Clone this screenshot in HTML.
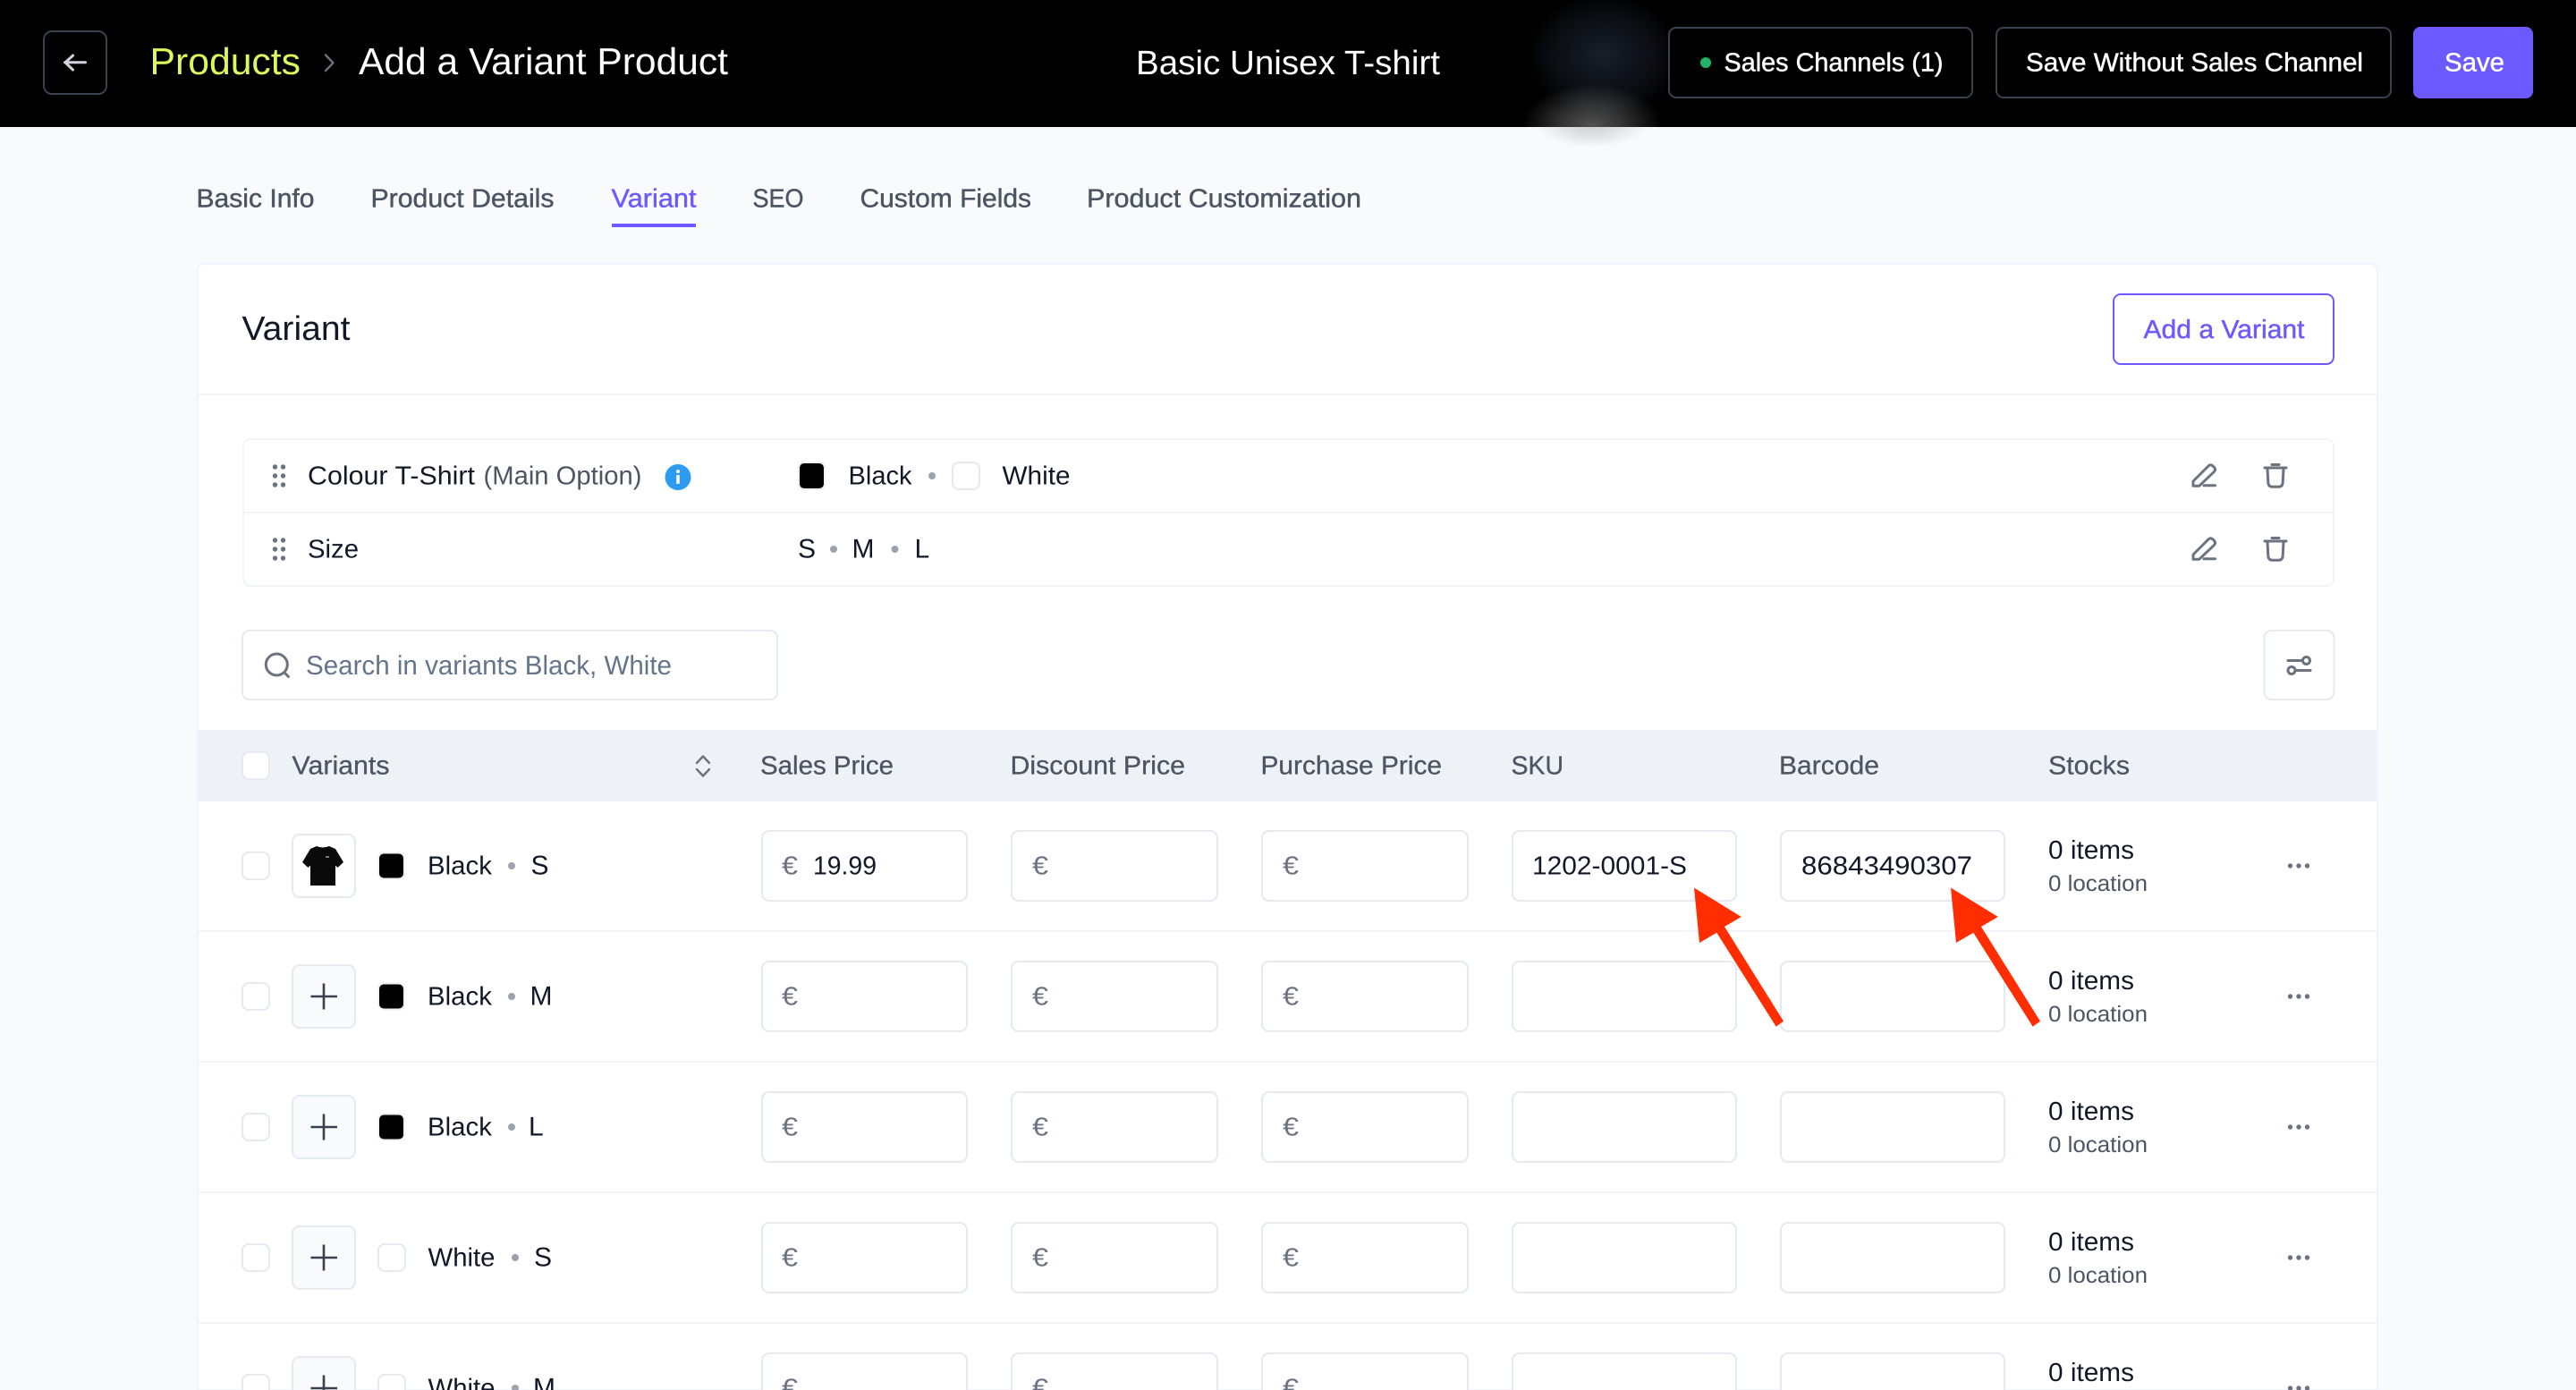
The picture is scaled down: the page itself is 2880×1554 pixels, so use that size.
<!DOCTYPE html>
<html lang="en"><head><meta charset="utf-8"><title>Add a Variant Product</title>
<style>
html,body{margin:0;padding:0;width:2880px;height:1554px;overflow:hidden;background:#f9fafc}
svg{display:block;font-family:"Liberation Sans",sans-serif;font-size:29px;text-rendering:geometricPrecision}
.d{fill:#111827}.g{fill:#4b5563}.e{fill:#6b7280}.w{fill:#fff}.m{stroke-width:.45px}
.box{fill:#fff;stroke:#e5e9f0;stroke-width:2}
.ic{fill:none;stroke:#6b7280;stroke-width:3;stroke-linecap:round;stroke-linejoin:round}
.sep{fill:#9ca3af}
</style></head><body>
<svg width="2880" height="1554" viewBox="0 0 2880 1554" xmlns="http://www.w3.org/2000/svg">
<defs>
<radialGradient id="navyA"><stop offset="0" stop-color="#1a202c" stop-opacity=".95"/><stop offset=".5" stop-color="#141922" stop-opacity=".7"/><stop offset="1" stop-color="#1a202c" stop-opacity="0"/></radialGradient>
<radialGradient id="gray"><stop offset="0" stop-color="#a3a3a3" stop-opacity=".5"/><stop offset=".45" stop-color="#a3a3a3" stop-opacity=".3"/><stop offset="1" stop-color="#a3a3a3" stop-opacity="0"/></radialGradient>
<clipPath id="top"><rect x="0" y="0" width="2880" height="142"/></clipPath>
<clipPath id="bot"><rect x="0" y="142" width="2880" height="100"/></clipPath>
<clipPath id="r5"><rect x="0" y="900" width="2880" height="70"/></clipPath>
<g id="inputs">
<rect class="box" x="852" y="929" width="229" height="78" rx="8"/>
<rect class="box" x="1131" y="929" width="230" height="78" rx="8"/>
<rect class="box" x="1411" y="929" width="230" height="78" rx="8"/>
<rect class="box" x="1691" y="929" width="250" height="78" rx="8"/>
<rect class="box" x="1991" y="929" width="250" height="78" rx="8"/>
<rect class="box" x="271" y="953" width="30" height="30" rx="7"/>
<circle cx="2560.5" cy="968" r="2.7" fill="#6b7280"/><circle cx="2570" cy="968" r="2.7" fill="#6b7280"/><circle cx="2579.5" cy="968" r="2.7" fill="#6b7280"/>
<rect x="222" y="1040" width="2436" height="2" fill="#f1f4f8"/>
</g>
<g id="plus">
<rect x="327" y="933" width="70" height="70" rx="8" fill="#f8fafc" stroke="#e5e9f0" stroke-width="2"/>
<path d="M347.5 968H377M362 953.5V982.5" fill="none" stroke="#374151" stroke-width="2.6"/>
</g>
<g id="blk"><rect x="423" y="953.500" width="29" height="29" rx="6" fill="#000" stroke="#eef1f5" stroke-width="2"/></g>
<g id="wht"><rect x="423" y="953" width="30" height="30" rx="7" class="box"/></g>
<g id="pen"><path class="ic" d="M2452 543.200v-5.200l17-17q2.400-2.200 4.800-.2l1.800 1.800q2 2.400-.2 4.800l-16.600 15.800zM2464 542.800h12.500"/></g>
<g id="trash"><path class="ic" d="M2532 523h24M2540 519.500h8M2535 523.500l.8 16q.4 4.700 4.700 4.700h7q4.300 0 4.700-4.700l.8-16"/></g>
<g id="drag"><g fill="#6b7280"><circle cx="307.500" cy="522" r="2.700"/><circle cx="316.500" cy="522" r="2.700"/><circle cx="307.500" cy="532" r="2.700"/><circle cx="316.500" cy="532" r="2.700"/><circle cx="307.500" cy="542" r="2.700"/><circle cx="316.500" cy="542" r="2.700"/></g></g>
</defs>

<rect width="2880" height="1554" fill="#f9fafc"/>
<!-- Header -->
<rect width="2880" height="142" fill="#000"/>
<ellipse cx="1793" cy="62" rx="85" ry="68" fill="url(#navyA)" clip-path="url(#top)"/>
<ellipse cx="1780" cy="140" rx="78" ry="46" fill="url(#gray)" clip-path="url(#top)"/>
<ellipse cx="1780" cy="140" rx="62" ry="25" fill="url(#gray)" clip-path="url(#bot)"/>

<rect x="49" y="35" width="70" height="70" rx="9" fill="none" stroke="#39414f" stroke-width="2"/>
<path d="M72.500 69.800H95.500M81.500 62l-8.500 7.800 8.500 8.300" fill="none" stroke="#d1d5db" stroke-width="3" stroke-linecap="round" stroke-linejoin="round"/>
<text x="167.500" y="83" font-size="42" fill="#dcf85e" textLength="168.500" lengthAdjust="spacingAndGlyphs">Products</text>
<path d="M364 61.500l8.500 8.800-8.500 8.800" fill="none" stroke="#6b7280" stroke-width="2.400" stroke-linecap="round" stroke-linejoin="round"/>
<text x="401" y="83" font-size="42" class="w" textLength="413" lengthAdjust="spacingAndGlyphs">Add a Variant Product</text>
<text x="1270" y="83" font-size="38" class="w" textLength="340" lengthAdjust="spacingAndGlyphs">Basic Unisex T-shirt</text>

<rect x="1866" y="31" width="339" height="78" rx="8" fill="#000" stroke="#39414f" stroke-width="2"/>
<circle cx="1907" cy="70" r="6" fill="#1eb566"/>
<text x="1927.500" y="79.500" class="w m" stroke="#fff" textLength="245" lengthAdjust="spacingAndGlyphs">Sales Channels (1)</text>
<rect x="2232" y="31" width="441" height="78" rx="8" fill="#000" stroke="#39414f" stroke-width="2"/>
<text x="2265" y="79.500" class="w m" stroke="#fff" textLength="377" lengthAdjust="spacingAndGlyphs">Save Without Sales Channel</text>
<rect x="2698" y="30" width="134" height="80" rx="8" fill="#6d5aff"/>
<text x="2733" y="79.500" class="w m" stroke="#fff" textLength="67" lengthAdjust="spacingAndGlyphs">Save</text>

<!-- Tabs -->
<text x="219.500" y="231.500" class="g m" stroke="#4b5563" textLength="132" lengthAdjust="spacingAndGlyphs">Basic Info</text>
<text x="414.500" y="231.500" class="g m" stroke="#4b5563" textLength="205" lengthAdjust="spacingAndGlyphs">Product Details</text>
<text x="683.500" y="231.500" fill="#6d5aff" stroke="#6d5aff" class="m" textLength="95" lengthAdjust="spacingAndGlyphs">Variant</text>
<rect x="684" y="250" width="94" height="4" fill="#6d5aff"/>
<text x="841.500" y="231.500" class="g m" stroke="#4b5563" textLength="57" lengthAdjust="spacingAndGlyphs">SEO</text>
<text x="961.500" y="231.500" class="g m" stroke="#4b5563" textLength="191.500" lengthAdjust="spacingAndGlyphs">Custom Fields</text>
<text x="1215" y="231.500" class="g m" stroke="#4b5563" textLength="307" lengthAdjust="spacingAndGlyphs">Product Customization</text>

<!-- Card -->
<path d="M221 1554V303q0-8 8-8H2650q8 0 8 8V1554z" fill="#fff" stroke="#f1f4f8" stroke-width="2"/>
<text x="270.500" y="380" font-size="38" class="d" textLength="121" lengthAdjust="spacingAndGlyphs">Variant</text>
<rect x="2363" y="329" width="246" height="78" rx="8" fill="#fff" stroke="#6d5aff" stroke-width="2"/>
<text x="2396.500" y="378" fill="#6d5aff" stroke="#6d5aff" class="m" textLength="180" lengthAdjust="spacingAndGlyphs">Add a Variant</text>
<rect x="222" y="440" width="2436" height="2" fill="#f1f4f8"/>

<!-- Options -->
<rect x="272" y="491" width="2337" height="164" rx="8" fill="#fff" stroke="#f1f4f8" stroke-width="2"/>
<rect x="272" y="572" width="2337" height="2" fill="#f1f4f8"/>
<use href="#drag"/><use href="#drag" y="82"/>
<text x="344" y="541.500" class="d" textLength="187" lengthAdjust="spacingAndGlyphs">Colour T-Shirt</text>
<text x="540.500" y="541.500" class="g" textLength="177" lengthAdjust="spacingAndGlyphs">(Main Option)</text>
<circle cx="758" cy="533.500" r="14.500" fill="#2e9bf0"/>
<circle cx="758" cy="527" r="2" fill="#fff"/><rect x="756.200" y="531" width="3.600" height="10" rx="1" fill="#fff"/>
<rect x="893" y="517" width="29" height="30" rx="6" fill="#000" stroke="#eef1f5" stroke-width="2"/>
<text x="948.500" y="541.500" class="d" textLength="71" lengthAdjust="spacingAndGlyphs">Black</text>
<circle cx="1042" cy="532" r="4" class="sep"/>
<rect x="1065" y="517" width="30" height="30" rx="7" class="box"/>
<text x="1120.500" y="541.500" class="d" textLength="76" lengthAdjust="spacingAndGlyphs">White</text>
<text x="344" y="623.500" class="d" textLength="57" lengthAdjust="spacingAndGlyphs">Size</text>
<text x="892" y="623.500" class="d" font-size="30">S</text>
<circle cx="932" cy="614" r="4" class="sep"/>
<text x="952.500" y="623.500" class="d" font-size="30">M</text>
<circle cx="1000.500" cy="614" r="4" class="sep"/>
<text x="1022.500" y="623.500" class="d" font-size="30">L</text>
<use href="#pen"/><use href="#trash"/><use href="#pen" y="82"/><use href="#trash" y="82"/>

<!-- Search -->
<rect x="271" y="705" width="598" height="77" rx="8" class="box"/>
<circle cx="309.300" cy="743" r="12" fill="none" stroke="#6b7280" stroke-width="3"/>
<path d="M318.500 752.500l4 4" fill="none" stroke="#6b7280" stroke-width="3" stroke-linecap="round"/>
<text x="342" y="754" fill="#64748b" font-size="30" textLength="409" lengthAdjust="spacingAndGlyphs">Search in variants Black, White</text>
<rect x="2531.500" y="705" width="78" height="77" rx="8" class="box"/>
<path d="M2558 738.500h16M2567 749.500h16" class="ic" stroke-width="2.600"/>
<circle cx="2578.500" cy="738.500" r="4" class="ic" stroke-width="2.600"/>
<circle cx="2562" cy="749.500" r="4" class="ic" stroke-width="2.600"/>

<!-- Table head -->
<rect x="222" y="816" width="2436" height="80" fill="#eef1f6"/>
<rect x="271" y="841" width="30" height="30" rx="7" class="box"/>
<text x="326.500" y="865.500" class="g" stroke="#4b5563" stroke-width=".3" textLength="109" lengthAdjust="spacingAndGlyphs">Variants</text>
<path d="M779 853L786 845.500l7 7.500M779 860L786 867.500l7-7.500" fill="none" stroke="#6b7280" stroke-width="2.400" stroke-linecap="round" stroke-linejoin="round"/>
<text x="850" y="865.500" class="g" stroke="#4b5563" stroke-width=".3" textLength="149" lengthAdjust="spacingAndGlyphs">Sales Price</text>
<text x="1129.500" y="865.500" class="g" stroke="#4b5563" stroke-width=".3" textLength="195.500" lengthAdjust="spacingAndGlyphs">Discount Price</text>
<text x="1409.500" y="865.500" class="g" stroke="#4b5563" stroke-width=".3" textLength="202.500" lengthAdjust="spacingAndGlyphs">Purchase Price</text>
<text x="1689.500" y="865.500" class="g" stroke="#4b5563" stroke-width=".3" textLength="58.500" lengthAdjust="spacingAndGlyphs">SKU</text>
<text x="1989" y="865.500" class="g" stroke="#4b5563" stroke-width=".3" textLength="112" lengthAdjust="spacingAndGlyphs">Barcode</text>
<text x="2290" y="865.500" class="g" stroke="#4b5563" stroke-width=".3" textLength="91" lengthAdjust="spacingAndGlyphs">Stocks</text>

<!-- Row 1 -->
<g>
<use href="#inputs"/>
<rect x="327" y="933" width="70" height="70" rx="8" fill="#fff" stroke="#e5e9f0" stroke-width="2"/>
<path d="M354 946q7 3 14 0l7 3 9 15-6.500 6-2.500-2.500V990h-28V967.500l-2.500 2.500-6.500-6 9-15z" fill="#0a0a0a"/>
<rect x="364" y="957" width="4" height="2" fill="#777"/>
<use href="#blk"/>
<text x="478" y="977.500" class="d" textLength="72" lengthAdjust="spacingAndGlyphs">Black</text>
<circle cx="572" cy="968" r="4" class="sep"/>
<text x="593.500" y="977.500" class="d" font-size="30">S</text>
<text x="874" y="977.500" class="e" textLength="18" lengthAdjust="spacingAndGlyphs">€</text>
<text x="909" y="977.500" class="d" textLength="71" lengthAdjust="spacingAndGlyphs">19.99</text>
<text x="1154" y="977.500" class="e" textLength="18" lengthAdjust="spacingAndGlyphs">€</text>
<text x="1434" y="977.500" class="e" textLength="18" lengthAdjust="spacingAndGlyphs">€</text>
<text x="1713" y="977.500" class="d" textLength="173" lengthAdjust="spacingAndGlyphs">1202-0001-S</text>
<text x="2014" y="977.500" class="d" textLength="191" lengthAdjust="spacingAndGlyphs">86843490307</text>
<text x="2290" y="960" class="d" textLength="96" lengthAdjust="spacingAndGlyphs">0 items</text>
<text x="2290" y="996" font-size="25" class="g" textLength="111" lengthAdjust="spacingAndGlyphs">0 location</text>
</g>

<!-- Row 2 -->
<g transform="translate(0 146)">
<use href="#inputs"/><use href="#plus"/><use href="#blk"/>
<text x="478" y="977.500" class="d" textLength="72" lengthAdjust="spacingAndGlyphs">Black</text>
<circle cx="572" cy="968" r="4" class="sep"/>
<text x="592.500" y="977.500" class="d" font-size="30">M</text>
<text x="874" y="977.500" class="e" textLength="18" lengthAdjust="spacingAndGlyphs">€</text>
<text x="1154" y="977.500" class="e" textLength="18" lengthAdjust="spacingAndGlyphs">€</text>
<text x="1434" y="977.500" class="e" textLength="18" lengthAdjust="spacingAndGlyphs">€</text>
<text x="2290" y="960" class="d" textLength="96" lengthAdjust="spacingAndGlyphs">0 items</text>
<text x="2290" y="996" font-size="25" class="g" textLength="111" lengthAdjust="spacingAndGlyphs">0 location</text>
</g>

<!-- Row 3 -->
<g transform="translate(0 292)">
<use href="#inputs"/><use href="#plus"/><use href="#blk"/>
<text x="478" y="977.500" class="d" textLength="72" lengthAdjust="spacingAndGlyphs">Black</text>
<circle cx="572" cy="968" r="4" class="sep"/>
<text x="591" y="977.500" class="d" font-size="30">L</text>
<text x="874" y="977.500" class="e" textLength="18" lengthAdjust="spacingAndGlyphs">€</text>
<text x="1154" y="977.500" class="e" textLength="18" lengthAdjust="spacingAndGlyphs">€</text>
<text x="1434" y="977.500" class="e" textLength="18" lengthAdjust="spacingAndGlyphs">€</text>
<text x="2290" y="960" class="d" textLength="96" lengthAdjust="spacingAndGlyphs">0 items</text>
<text x="2290" y="996" font-size="25" class="g" textLength="111" lengthAdjust="spacingAndGlyphs">0 location</text>
</g>

<!-- Row 4 -->
<g transform="translate(0 438)">
<use href="#inputs"/><use href="#plus"/><use href="#wht"/>
<text x="478.500" y="977.500" class="d" textLength="75" lengthAdjust="spacingAndGlyphs">White</text>
<circle cx="576" cy="968" r="4" class="sep"/>
<text x="597" y="977.500" class="d" font-size="30">S</text>
<text x="874" y="977.500" class="e" textLength="18" lengthAdjust="spacingAndGlyphs">€</text>
<text x="1154" y="977.500" class="e" textLength="18" lengthAdjust="spacingAndGlyphs">€</text>
<text x="1434" y="977.500" class="e" textLength="18" lengthAdjust="spacingAndGlyphs">€</text>
<text x="2290" y="960" class="d" textLength="96" lengthAdjust="spacingAndGlyphs">0 items</text>
<text x="2290" y="996" font-size="25" class="g" textLength="111" lengthAdjust="spacingAndGlyphs">0 location</text>
</g>

<!-- Row 5 -->
<g transform="translate(0 584)" clip-path="url(#r5)">
<use href="#inputs"/><use href="#plus"/><use href="#wht"/>
<text x="478.500" y="977.500" class="d" textLength="75" lengthAdjust="spacingAndGlyphs">White</text>
<circle cx="576" cy="968" r="4" class="sep"/>
<text x="596" y="977.500" class="d" font-size="30">M</text>
<text x="874" y="977.500" class="e" textLength="18" lengthAdjust="spacingAndGlyphs">€</text>
<text x="1154" y="977.500" class="e" textLength="18" lengthAdjust="spacingAndGlyphs">€</text>
<text x="1434" y="977.500" class="e" textLength="18" lengthAdjust="spacingAndGlyphs">€</text>
<text x="2290" y="960" class="d" textLength="96" lengthAdjust="spacingAndGlyphs">0 items</text>
</g>

<!-- Arrows -->
<path d="M1894 992.500L1946.800 1025 1928 1036 1994 1141.700 1985.700 1147.700 1919.300 1042.700 1900 1054z" fill="#ff2d00"/>
<path d="M2181 992.500L2233.800 1025 2215 1036 2281 1141.700 2272.700 1147.700 2206.300 1042.700 2187 1054z" fill="#ff2d00"/>
</svg>
</body></html>
